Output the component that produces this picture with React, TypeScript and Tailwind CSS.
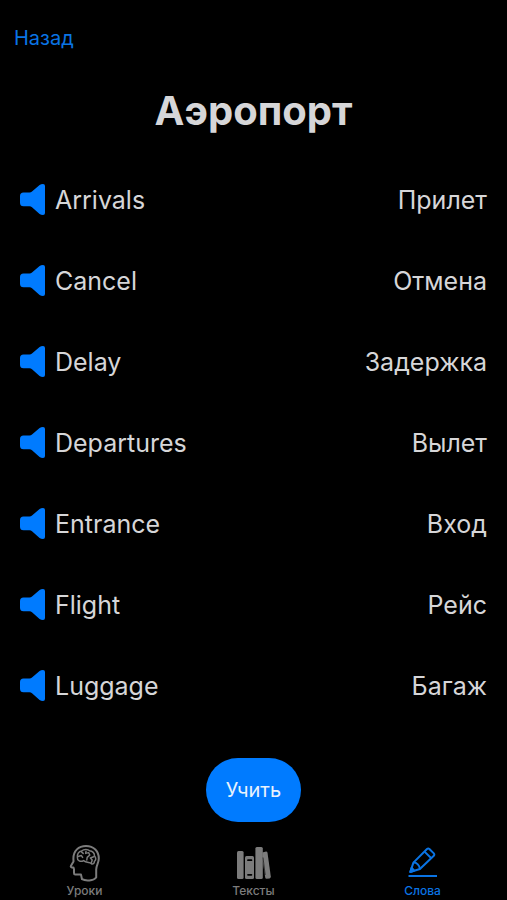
import type { ReactNode } from "react";

interface Word {
  en: string;
  ru: string;
}

const words: Word[] = [
  { en: "Arrivals", ru: "Прилет" },
  { en: "Cancel", ru: "Отмена" },
  { en: "Delay", ru: "Задержка" },
  { en: "Departures", ru: "Вылет" },
  { en: "Entrance", ru: "Вход" },
  { en: "Flight", ru: "Рейс" },
  { en: "Luggage", ru: "Багаж" },
];

function SpeakerIcon() {
  return (
    <svg width="25" height="31" viewBox="0 0 25 31" fill="currentColor" aria-hidden="true">
      <path d="M3.5 8.5H9.5Q11 8.5 12 7.6L19.6 1Q21 0 23 0Q25 0 25 2V29Q25 31 23 31Q21 31 19.6 30L12 23.2Q11 22.3 9.5 22.3H3.5Q0 22.3 0 18.8V12Q0 8.5 3.5 8.5Z" />
    </svg>
  );
}

function HeadIcon() {
  return (
    <svg width="32" height="38" viewBox="0 0 32 38" fill="none" stroke="currentColor" strokeWidth="2" strokeLinejoin="round" strokeLinecap="round" aria-hidden="true">
      <path d="M4.4 14.5C4.4 6.8 9.5 2 17 2C24.8 2 29.8 7.3 29.8 14.5C29.8 18.6 27.2 21.6 27.2 25.5V33.5C24.5 37 16.5 37.2 13 35.2L12 30.6H6.2Q5 30.6 5 29V25.2L4.4 23.4H2.6Q1.3 23 2 21.7L4.5 17.4Z" />
      <g strokeWidth="1.5">
        <path d="M14.5 16.6C11.6 18.4 8 16.6 8.4 13.7C7.8 10.5 9.8 7.2 12.6 7C15 4.8 19 5 20.6 6.8C23.5 7 25.7 9.2 25.4 11.7C27.2 14 26.8 16.2 25.4 17.3C25.6 19.4 23.8 20.5 22.2 19.5C21 18 17.4 19.2 14.5 16.6Z" />
        <path d="M9 12.4L12.4 11.6L13.6 13.4M12.2 7.6L14.2 9.4M17 7.4L16.6 9.4L19.6 8.6L20.8 11L18.2 13.4L17.8 16M21.4 14L24.6 12.8M21.4 14L23.2 16L22.4 18.4" />
      </g>
    </svg>
  );
}

function BooksIcon() {
  return (
    <svg width="34" height="32" viewBox="0 0 34 32" aria-hidden="true">
      <g fill="currentColor">
        <rect x="0" y="4" width="6.6" height="28" rx="1.5" />
        <rect x="8" y="9" width="9" height="23" rx="1.5" />
        <rect x="18.4" y="0" width="7.4" height="32" rx="1.5" />
        <path d="M25.4 5.4L29 4.6Q30.2 4.6 30.5 5.8L33.8 29.6Q33.8 31 32.6 31.4L29.6 31.8Q28.4 31.8 28.2 30.6L25.4 12Z" />
      </g>
      <path d="M26 10.5L28.2 28" stroke="#000" strokeWidth="0.6" />
      <path d="M11 13.2H14.4M11 27.8H14.4" stroke="#000" strokeWidth="1.8" strokeLinecap="round" />
    </svg>
  );
}

function PencilIcon() {
  return (
    <svg width="30" height="32" viewBox="0 0 30 32" fill="none" stroke="currentColor" strokeWidth="2" strokeLinejoin="round" aria-hidden="true">
      <path d="M2.3 25L5.4 15.6L19 2Q20.2 1 21.4 2L25.8 6.4Q26.8 7.6 25.8 8.8L11.9 22Z" />
      <path d="M16.5 4.6L23.3 11.2M5.4 15.6C8.8 15.4 11.6 18.4 11.9 22" />
      <path d="M2.3 25L3.6 20.8L6.2 23.6Z" fill="currentColor" />
      <path d="M0.5 29H29" />
    </svg>
  );
}

function WordRow({ word }: { word: Word }) {
  return (
    <li className="flex h-[81px] items-center justify-between text-[25px] leading-8">
      <span className="flex items-center gap-[10px]">
        <button type="button" aria-label={`Прослушать ${word.en}`} className="text-[#007bff]">
          <SpeakerIcon />
        </button>
        <span>{word.en}</span>
      </span>
      <span>{word.ru}</span>
    </li>
  );
}

function Tab({ label, active, children }: { label: string; active?: boolean; children: ReactNode }) {
  return (
    <button
      type="button"
      aria-current={active ? "page" : undefined}
      className={`flex flex-col items-center text-[12px] leading-4 font-medium ${active ? "text-[#0a74e4]" : "text-[#7c7c7c]"}`}
    >
      <span className="flex h-10 items-center">{children}</span>
      {label}
    </button>
  );
}

export default function App() {
  return (
    <div className="flex min-h-screen flex-col bg-black font-['Inter','Liberation_Sans',sans-serif] text-[#d6d6d8]">
      <header className="px-[14px] pt-[26px]">
        <button type="button" className="block text-[20px] leading-6 text-[#0a74e4]">
          Назад
        </button>
      </header>

      <main className="flex grow flex-col">
        <h1 className="pt-9 text-center text-[40px] leading-[50px] font-bold">Аэропорт</h1>
        <ul className="mt-[23px] px-5">
          {words.map((word) => (
            <WordRow key={word.en} word={word} />
          ))}
        </ul>
        <button
          type="button"
          className="mt-8 h-16 self-center rounded-[32px] bg-[#007bff] px-5 text-[20px] leading-6 text-[#e8f2fc]"
        >
          Учить
        </button>
      </main>

      <nav className="grid grid-cols-3 pb-px">
        <Tab label="Уроки">
          <HeadIcon />
        </Tab>
        <Tab label="Тексты">
          <BooksIcon />
        </Tab>
        <Tab label="Слова" active>
          <PencilIcon />
        </Tab>
      </nav>
    </div>
  );
}
